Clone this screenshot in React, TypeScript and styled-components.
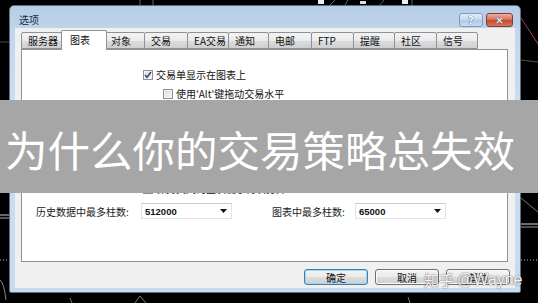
import React from "react";
import styled, { createGlobalStyle } from "styled-components";

const Global = createGlobalStyle`
  html, body { margin: 0; padding: 0; background: #000; }
  body { width: 538px; height: 303px; overflow: hidden; }
  * { box-sizing: border-box; }
`;

const CJK = `"Noto Sans CJK SC", "Noto Sans", sans-serif`;

const Stage = styled.div`
  position: relative;
  width: 538px;
  height: 303px;
  padding: 5px 17px 10px 9px;
  background: #000;
  overflow: hidden;
  font-family: ${CJK};
`;

const ChartLayer = styled.svg`
  position: absolute;
  inset: 0;
  z-index: 0;
`;

const Dialog = styled.div`
  position: relative;
  z-index: 1;
  width: 512px;
  height: 288px;
  display: flex;
  flex-direction: column;
  border: 1px solid #5c6f86;
  border-radius: 5px 5px 2px 2px;
  background: linear-gradient(180deg, #b6cde7 0%, #c4d7ec 12%, #cddff1 40%, #c7dbef 100%);
`;

const TitleBar = styled.div`
  height: 22px;
  display: flex;
  align-items: flex-start;
  justify-content: space-between;
  padding-left: 9px;
`;

const TitleText = styled.span`
  margin-top: 8px;
  font-size: 10px;
  line-height: 12px;
  color: #1a2a3c;
`;

const CaptionButtons = styled.div`
  display: flex;
  gap: 3px;
  margin-top: 7px;
  margin-right: 7px;
`;

const CaptionButton = styled.div<{ $close?: boolean }>`
  width: ${(p) => (p.$close ? 27 : 24)}px;
  height: 14px;
  border-radius: 3px;
  border: 1px solid ${(p) => (p.$close ? "#8a3a2c" : "#7d9bbf")};
  background: ${(p) =>
    p.$close
      ? "linear-gradient(180deg, #eab0a3 0%, #d9735c 45%, #c44a2f 55%, #d8765c 100%)"
      : "linear-gradient(180deg, #e3eef9 0%, #c6d9ee 45%, #b2cae6 55%, #c8dcf0 100%)"};
  display: flex;
  align-items: center;
  justify-content: center;
  color: #fff;
  font-family: "DejaVu Sans", sans-serif;
  font-size: 10px;
  font-weight: bold;
  text-shadow: 0 0 1px #3f5f86, 0 0 1px #3f5f86;
`;

const Client = styled.div`
  flex: 1;
  margin: 0 5px 4px 5px;
  background: #f0f0f0;
  display: flex;
  flex-direction: column;
  padding: 3px 7px 0 6px;
`;

const TabStrip = styled.div`
  height: 19px;
  display: flex;
  align-items: flex-end;
  padding-left: 1px;
  position: relative;
  z-index: 2;
`;

const Tab = styled.div<{ $w: number; $active?: boolean }>`
  width: ${(p) => p.$w}px;
  height: ${(p) => (p.$active ? 20 : 17)}px;
  margin: ${(p) => (p.$active ? "0 -2px 0 -2px" : "0 0 1px 0")};
  padding-left: ${(p) => (p.$active ? 8 : 6)}px;
  padding-top: ${(p) => (p.$active ? 2 : 1)}px;
  border: 1px solid #8d9199;
  border-bottom: ${(p) => (p.$active ? "none" : "1px solid #8d9199")};
  margin-left: -1px;
  border-radius: 2px 2px 0 0;
  background: ${(p) =>
    p.$active ? "#ffffff" : "linear-gradient(180deg, #f3f3f3 0%, #ebebeb 50%, #dddddd 51%, #cfcfcf 100%)"};
  font-size: 10px;
  line-height: 14px;
  color: #111;
  position: relative;
  z-index: ${(p) => (p.$active ? 3 : 1)};
  white-space: nowrap;
`;

const Panel = styled.div`
  flex: 1;
  margin-top: -1px;
  border: 1px solid #8d9199;
  background: #fff;
  display: flex;
  flex-direction: column;
  padding: 15px 0 0 14px;
  position: relative;
  z-index: 1;
`;

const CheckRow = styled.div<{ $indent: number }>`
  height: 19px;
  display: flex;
  align-items: center;
  gap: 3px;
  padding-left: ${(p) => p.$indent}px;
  font-size: 10px;
  color: #111;
  white-space: nowrap;
`;

const HiddenRows = styled.div`
  height: 76px;
`;

const Box = styled.span`
  width: 10px;
  height: 10px;
  border: 1px solid #8e8f8f;
  background: linear-gradient(135deg, #dcdcdc 0%, #f6f6f6 100%);
  display: flex;
  align-items: center;
  justify-content: center;
  box-shadow: inset 0 0 0 1px #f4f4f4;
`;

const ComboRow = styled.div`
  margin-top: 5px;
  display: flex;
  align-items: center;
  height: 16px;
`;

const Label = styled.span<{ $w: number }>`
  width: ${(p) => p.$w}px;
  font-size: 10px;
  color: #222;
  white-space: nowrap;
`;

const Combo = styled.div<{ $gap?: number }>`
  width: 91px;
  height: 16px;
  margin-right: ${(p) => p.$gap ?? 0}px;
  border: 1px solid #e2e3ea;
  border-top-color: #c9cbd3;
  background: #fff;
  display: flex;
  align-items: center;
  justify-content: space-between;
  padding: 0 4px 0 3px;
  font-family: "Liberation Sans", Arial, sans-serif;
  font-size: 9.5px;
  font-weight: 600;
  color: #111;
`;

const ButtonRow = styled.div`
  height: 26px;
  display: flex;
  justify-content: flex-end;
  align-items: flex-start;
  gap: 7px;
  padding-top: 7px;
  margin-right: -2px;
`;

const Button = styled.div<{ $default?: boolean }>`
  width: 64px;
  height: 16px;
  border-radius: 3px;
  border: 1px solid ${(p) => (p.$default ? "#3c7fb1" : "#707070")};
  box-shadow: ${(p) => (p.$default ? "inset 0 0 0 1px #9fd5f5" : "inset 0 0 0 1px #fbfbfb")};
  background: linear-gradient(180deg, #f4f4f4 0%, #ebebeb 48%, #dddddd 52%, #cfcfcf 100%);
  display: flex;
  align-items: center;
  justify-content: center;
  font-size: 10px;
  color: #111;
`;

const Banner = styled.div`
  position: absolute;
  z-index: 5;
  left: 0;
  top: 100px;
  width: 538px;
  height: 93px;
  background: #a6a6a6;
  display: flex;
  align-items: center;
  padding: 6px 0 0 5px;
  color: #fff;
  font-family: ${CJK};
  font-size: 42.5px;
  line-height: 1;
  white-space: nowrap;
`;

const Watermark = styled.div`
  position: absolute;
  z-index: 6;
  left: 424px;
  top: 271px;
  color: rgba(255, 255, 255, 0.95);
  font-family: ${CJK};
  font-size: 15px;
  line-height: 18px;
  white-space: nowrap;
  text-shadow: 0 0 1px rgba(60, 60, 60, 0.7), 0 0 2px rgba(60, 60, 60, 0.5);
  display: flex;
  gap: 3px;
`;

const WmLatin = styled.span`
  font-family: "Liberation Sans", Arial, sans-serif;
  font-size: 16px;
`;

const Check = () => (
  <svg width="8" height="8" viewBox="0 0 8 8">
    <path d="M1 4 L3 6.2 L7 1" fill="none" stroke="#2a4f86" strokeWidth="1.6" />
  </svg>
);

const Arrow = () => (
  <svg width="7" height="4" viewBox="0 0 7 4">
    <path d="M0 0 H7 L3.5 4 Z" fill="#111" />
  </svg>
);

const tabs: { label: string; w: number }[] = [
  { label: "服务器", w: 41 },
  { label: "图表", w: 46 },
  { label: "对象", w: 41 },
  { label: "交易", w: 44 },
  { label: "EA交易", w: 42 },
  { label: "通知", w: 41 },
  { label: "电邮", w: 44 },
  { label: "FTP", w: 43 },
  { label: "提醒", w: 42 },
  { label: "社区", w: 43 },
  { label: "信号", w: 42 },
];

export default function App() {
  return (
    <>
      <Global />
      <Stage>
        <ChartLayer width="538" height="303" viewBox="0 0 538 303">
          <line x1="140" y1="0" x2="140" y2="5" stroke="#666" strokeWidth="1" />
          <line x1="153" y1="0" x2="153" y2="5" stroke="#666" strokeWidth="1" />
          <rect x="318" y="0" width="6" height="4" fill="#eee" />
          <rect x="360" y="1" width="6" height="3" fill="#ddd" />
          <rect x="402" y="0" width="6" height="4" fill="#eee" />
          <path d="M330 5 L335 0 M345 5 L348 0 M380 5 L384 0" stroke="#3a7a3a" strokeWidth="1" />
          <line x1="412" y1="0" x2="412" y2="5" stroke="#3a7a3a" />
          <line x1="0" y1="42" x2="9" y2="42" stroke="#6b3a2a" strokeWidth="1" />
          <line x1="0" y1="215" x2="9" y2="215" stroke="#ccc" strokeWidth="1" />
          <line x1="0" y1="218" x2="9" y2="218" stroke="#aaa" strokeWidth="1" />
          <line x1="0" y1="260" x2="9" y2="260" stroke="#bbb" strokeDasharray="1 2" />
          <path d="M0 280 Q4 283 6 300" stroke="#888" fill="none" />
          <line x1="521" y1="18" x2="538" y2="44" stroke="#a04060" strokeWidth="1" />
          <line x1="521" y1="60" x2="538" y2="62" stroke="#553" strokeWidth="1" />
          <line x1="521" y1="198" x2="538" y2="212" stroke="#777" strokeWidth="1" />
          <line x1="521" y1="224" x2="538" y2="224" stroke="#ddd" strokeWidth="1" />
          <line x1="521" y1="227" x2="538" y2="227" stroke="#999" strokeWidth="1" />
          <line x1="521" y1="260" x2="538" y2="260" stroke="#bbb" strokeDasharray="1 2" />
          <line x1="70" y1="298" x2="72" y2="303" stroke="#777" />
          <path d="M135 303 L140 296 L146 303" stroke="#777" fill="none" />
          <line x1="408" y1="297" x2="410" y2="303" stroke="#777" />
        </ChartLayer>
        <Dialog>
          <TitleBar>
            <TitleText>选项</TitleText>
            <CaptionButtons>
              <CaptionButton>?</CaptionButton>
              <CaptionButton $close>✕</CaptionButton>
            </CaptionButtons>
          </TitleBar>
          <Client>
            <TabStrip>
              {tabs.map((t, i) => (
                <Tab key={t.label} $w={t.w} $active={i === 1}>
                  {t.label}
                </Tab>
              ))}
            </TabStrip>
            <Panel>
              <CheckRow $indent={107}>
                <Box>
                  <Check />
                </Box>
                交易单显示在图表上
              </CheckRow>
              <CheckRow $indent={127}>
                <Box />
                使用'Alt'键拖动交易水平
              </CheckRow>
              <HiddenRows />
              <CheckRow $indent={107}>
                <Box>
                  <Check />
                </Box>
                保持关闭的图表便于再次打开
              </CheckRow>
              <ComboRow>
                <Label $w={105}>历史数据中最多柱数:</Label>
                <Combo $gap={40}>
                  512000
                  <Arrow />
                </Combo>
                <Label $w={83}>图表中最多柱数:</Label>
                <Combo>
                  65000
                  <Arrow />
                </Combo>
              </ComboRow>
            </Panel>
            <ButtonRow>
              <Button $default>确定</Button>
              <Button>取消</Button>
              <Button>帮助</Button>
            </ButtonRow>
          </Client>
        </Dialog>
        <Banner>为什么你的交易策略总失效</Banner>
        <Watermark>
          <span>知乎</span>
          <WmLatin>@Wayne</WmLatin>
        </Watermark>
      </Stage>
    </>
  );
}
